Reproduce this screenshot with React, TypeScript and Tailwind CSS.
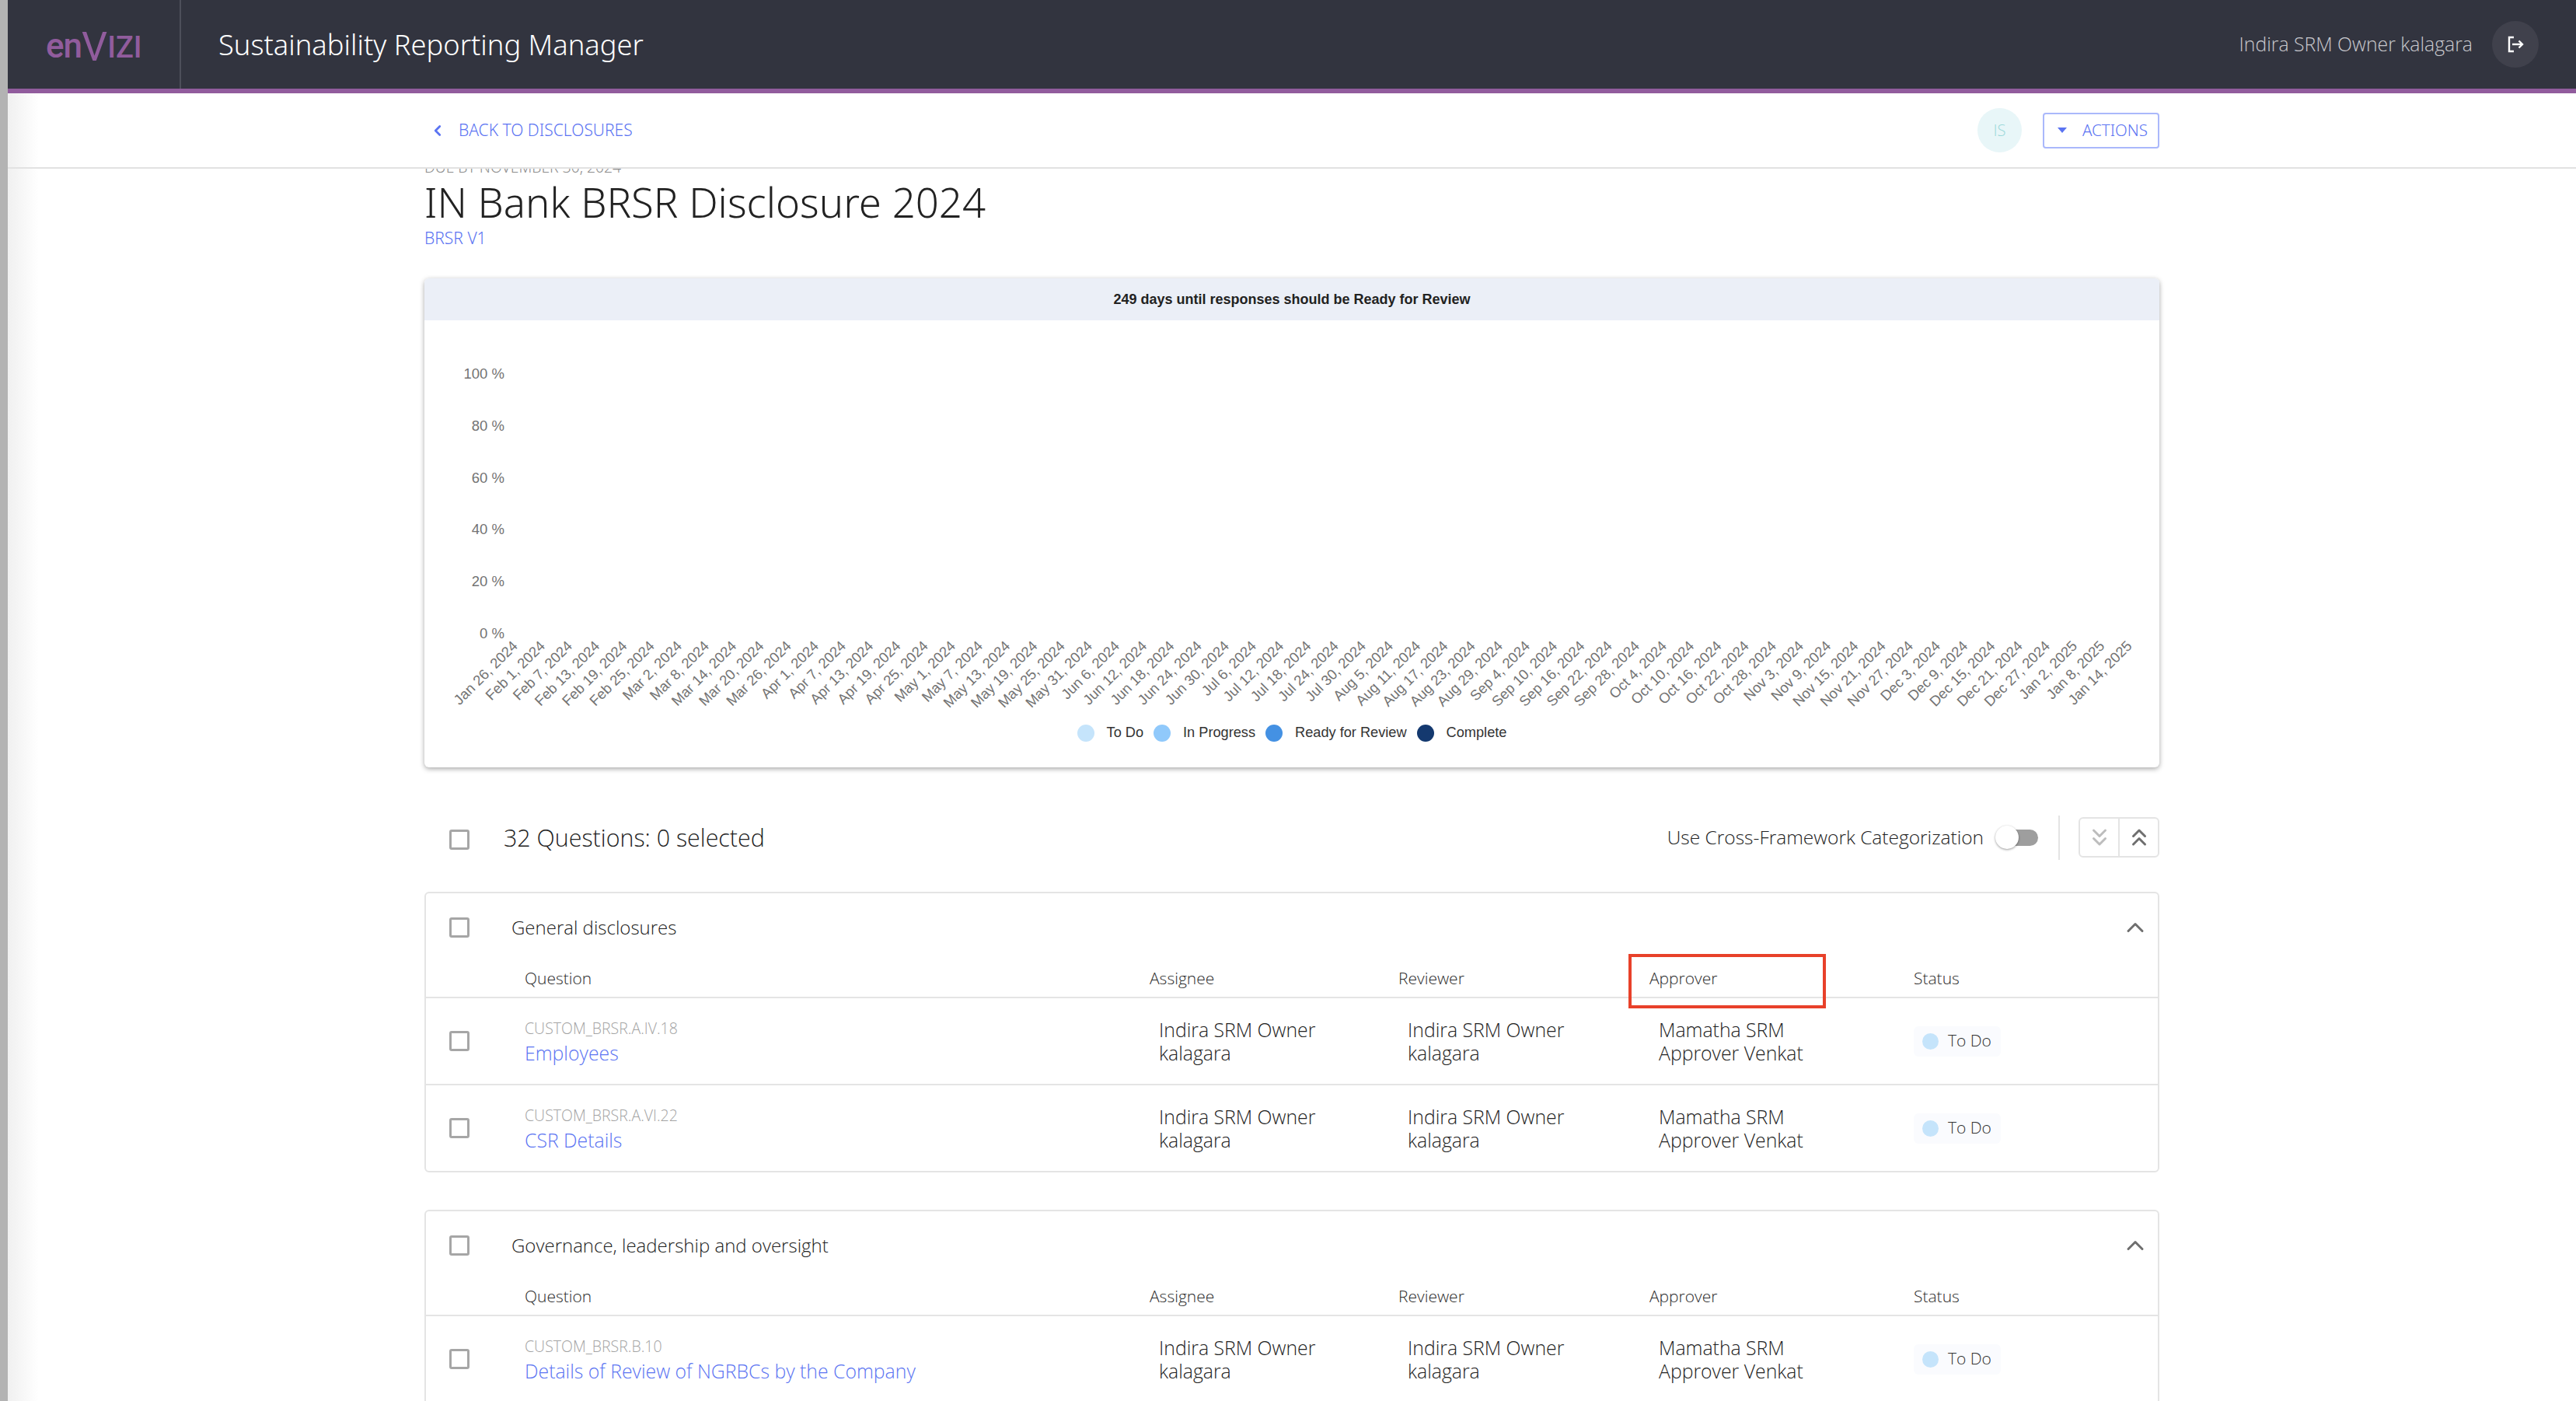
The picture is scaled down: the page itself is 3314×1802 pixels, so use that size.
import React from 'react';
import { ChevronLeft, ChevronUp, ChevronsDown, ChevronsUp } from 'lucide-react';

const MONTHS = ['Jan', 'Feb', 'Mar', 'Apr', 'May', 'Jun', 'Jul', 'Aug', 'Sep', 'Oct', 'Nov', 'Dec'];

// one tick every 6 days, same as the chart axis
const ticks = Array.from({ length: 60 }, (_, i) => {
  const d = new Date(Date.UTC(2024, 0, 26 + i * 6));
  return `${MONTHS[d.getUTCMonth()]} ${d.getUTCDate()}, ${d.getUTCFullYear()}`;
});

const legend = [
  { label: 'To Do', color: 'bg-[#c5e4fb]' },
  { label: 'In Progress', color: 'bg-[#90c9fb]' },
  { label: 'Ready for Review', color: 'bg-[#4491e3]' },
  { label: 'Complete', color: 'bg-[#14396f]' },
];

const COLS = 'grid grid-cols-[127px_804px_320px_323px_340px_1fr]';

function Checkbox() {
  return <div className="h-[26px] w-[26px] rounded-[3px] border-[3px] border-[#a6a6a6] bg-white" />;
}

function Chart() {
  const yLabels = ['100 %', '80 %', '60 %', '40 %', '20 %', '0 %'];
  return (
    <svg className="block h-[509px] w-full" style={{ fontFamily: '"Liberation Sans", sans-serif' }}>
      {yLabels.map((label, i) => (
        <text key={label} x={103} y={75 + i * 66.8} textAnchor="end" fontSize={18.5} fill="#737373">
          {label}
        </text>
      ))}
      {ticks.map((tick, i) => {
        const x = 121 + i * 35.2;
        return (
          <text key={tick} x={x} y={420} textAnchor="end" fontSize={18.5} fill="#737373" transform={`rotate(-45 ${x} 420)`}>
            {tick}
          </text>
        );
      })}
    </svg>
  );
}

function Person({ lines }: { lines: string[] }) {
  return (
    <div className="pl-3 text-[24.8px] leading-[30px] text-[#222222]">
      {lines.map((l) => (
        <div key={l}>{l}</div>
      ))}
    </div>
  );
}

function Row({ code, title, last }: { code: string; title: string; last?: boolean }) {
  return (
    <div className={`${COLS} items-center ${last ? 'h-[110px]' : 'h-[112px] border-b-2 border-[#e4e4e4]'}`}>
      <div className="flex pl-[30px]">
        <Checkbox />
      </div>
      <div>
        <div className="text-[19.5px] leading-[30px] text-[#a3a3a3]">{code}</div>
        <div className="text-[24.8px] leading-[32px] text-[#5b74f2]">{title}</div>
      </div>
      <Person lines={['Indira SRM Owner', 'kalagara']} />
      <Person lines={['Indira SRM Owner', 'kalagara']} />
      <Person lines={['Mamatha SRM', 'Approver Venkat']} />
      <div>
        <div className="flex h-[39px] w-[112px] items-center gap-[12px] rounded-md bg-[#fafbfe] pl-[11px]">
          <div className="h-[21px] w-[21px] rounded-full bg-[#c5e4fb]" />
          <span className="text-[21px] text-[#333333]">To Do</span>
        </div>
      </div>
    </div>
  );
}

function Section({ title, marked, children }: { title: string; marked?: boolean; children: React.ReactNode }) {
  return (
    <section className="rounded-md border-2 border-[#e4e4e4]">
      <div className="flex h-[87px] items-center pl-[30px] pr-[11px]">
        <Checkbox />
        <h2 className="ml-[54px] flex-1 text-[24px] text-[#222222]">{title}</h2>
        <ChevronUp className="h-[36px] w-[36px] text-[#6f6f6f]" strokeWidth={2} />
      </div>
      <div className={`${COLS} h-[48px] items-start border-b-2 border-[#e4e4e4] pt-[7px] text-[21px] text-[#2c2c2c]`}>
        <div />
        <div>Question</div>
        <div>Assignee</div>
        <div>Reviewer</div>
        <div className="relative">
          Approver
          {marked && <div className="absolute left-[-27px] top-[-16px] h-[70px] w-[254px] border-4 border-[#e8412a]" />}
        </div>
        <div>Status</div>
      </div>
      {children}
    </section>
  );
}

export default function App() {
  return (
    <div className="flex h-[1802px] w-[3314px] overflow-hidden bg-white font-['Open_Sans',sans-serif] font-light">
      <div className="w-[10px] shrink-0 bg-[#b3b3b3]" />
      <div className="flex min-w-0 flex-1 flex-col">
        <header className="flex h-[120px] shrink-0 items-center border-b-[6px] border-[#915c9d] bg-[#32343f]">
          <div className="flex h-full w-[223px] items-center border-r-2 border-[#4d4f5a] pl-[49px]">
            <span className="font-['Roboto',sans-serif] text-[38px] font-medium leading-none text-[#915c9d]">
              <span className="text-[44px] tracking-[-1px]">en</span>
              <span className="inline-block translate-y-[4px] text-[52px] font-normal">V</span>
              IZI
            </span>
          </div>
          <h1 className="ml-[48px] flex-1 font-['Noto_Sans',sans-serif] text-[36.3px] font-light text-white">
            Sustainability Reporting Manager
          </h1>
          <span className="text-[24.8px] text-[#c9c9ce]">Indira SRM Owner kalagara</span>
          <div className="ml-[25px] mr-[48px] flex h-[60px] w-[60px] items-center justify-center rounded-full bg-[#40414c]">
            <svg viewBox="0 0 24 24" className="h-[24px] w-[24px]" fill="none" stroke="white" strokeWidth={2.4}>
              <path d="M10 3H4v18h6" />
              <path d="M8 12h13" />
              <path d="M16.500 7.500 21 12l-4.500 4.500" />
            </svg>
          </div>
        </header>

        <div className="relative z-10 shrink-0 border-b-2 border-[#e2e2e2] bg-[linear-gradient(to_right,#f0f0f0,#ffffff_40px)]">
          <div className="mx-auto flex h-[95px] w-[2232px] items-center font-['Noto_Sans',sans-serif]">
            <ChevronLeft className="ml-[6px] h-[22px] w-[22px] text-[#5b74f2]" strokeWidth={3} />
            <span className="ml-[16px] flex-1 text-[21px] text-[#5b74f2]">BACK TO DISCLOSURES</span>
            <div className="flex h-[57px] w-[57px] items-center justify-center rounded-full bg-[#e8f6f8] font-['Open_Sans',sans-serif] text-[20px] text-[#9bd8d8]">
              IS
            </div>
            <button className="ml-[27px] flex h-[46px] w-[150px] items-center rounded-[4px] border-2 border-[#aab8fb] pl-[17px] text-[20.5px] text-[#5b74f2]">
              <span className="h-0 w-0 border-x-[6px] border-t-[7px] border-x-transparent border-t-[#5b74f2]" />
              <span className="ml-[20px]">ACTIONS</span>
            </button>
          </div>
        </div>

        <main className="min-h-0 flex-1 overflow-hidden bg-[linear-gradient(to_right,#f0f0f0,#ffffff_40px)]">
          <div className="mx-auto w-[2232px]">
            <div className="font-['Noto_Sans',sans-serif]">
              <div className="mt-[-14px] text-[19.3px] leading-[24px] text-[#8d8d8d]">DUE BY NOVEMBER 30, 2024</div>
              <div className="text-[52.7px] leading-[66px] text-[#222222]">IN Bank BRSR Disclosure 2024</div>
              <div className="mt-[1px] text-[21px] leading-[24px] text-[#5b74f2]">BRSR V1</div>
            </div>

            <div className="mt-[40px] overflow-hidden rounded-md bg-white shadow-[0_2px_6px_rgba(0,0,0,0.35)]">
              <div className="flex h-[54px] items-center justify-center bg-[#ebeff7] font-['Liberation_Sans',sans-serif] text-[18px] font-bold text-[#222222]">
                249 days until responses should be Ready for Review
              </div>
              <Chart />
              <div className="flex h-[66px] items-start justify-center gap-[13px] pt-[8px] font-['Liberation_Sans',sans-serif] text-[18.2px] text-[#333333]">
                {legend.map((item) => (
                  <div key={item.label} className="flex items-center gap-[16px]">
                    <div className={`h-[22px] w-[22px] rounded-full ${item.color}`} />
                    <span>{item.label}</span>
                  </div>
                ))}
              </div>
            </div>

            <div className="mt-[60px] flex h-[60px] items-center pl-[32px]">
              <div className="mt-[6px]">
                <Checkbox />
              </div>
              <span className="ml-[44px] mt-[2px] flex-1 text-[30.4px] text-[#222222]">32 Questions: 0 selected</span>
              <span className="text-[24.5px] text-[#222222]">Use Cross-Framework Categorization</span>
              <div className="relative ml-[29px] h-[21px] w-[41px] rounded-full bg-[#9e9e9e]">
                <div className="absolute left-[-14px] top-[-5px] h-[30px] w-[30px] rounded-full bg-white shadow-[0_1px_3px_rgba(0,0,0,0.4)]" />
              </div>
              <div className="ml-[26px] h-[57px] w-[2px] bg-[#e4e4e4]" />
              <div className="ml-[24px] flex h-[52px] w-[104px] rounded-md border-2 border-[#e4e4e4]">
                <div className="flex flex-1 items-center justify-center border-r-2 border-[#e4e4e4]">
                  <ChevronsDown className="h-[36px] w-[36px] text-[#bdbdbd]" strokeWidth={2} />
                </div>
                <div className="flex flex-1 items-center justify-center">
                  <ChevronsUp className="h-[36px] w-[36px] text-[#6f6f6f]" strokeWidth={2} />
                </div>
              </div>
            </div>

            <div className="mt-[40px] flex flex-col gap-[48px]">
              <Section title="General disclosures" marked>
                <Row code="CUSTOM_BRSR.A.IV.18" title="Employees" />
                <Row code="CUSTOM_BRSR.A.VI.22" title="CSR Details" last />
              </Section>
              <Section title="Governance, leadership and oversight">
                <Row code="CUSTOM_BRSR.B.10" title="Details of Review of NGRBCs by the Company" />
              </Section>
            </div>
          </div>
        </main>
      </div>
    </div>
  );
}
